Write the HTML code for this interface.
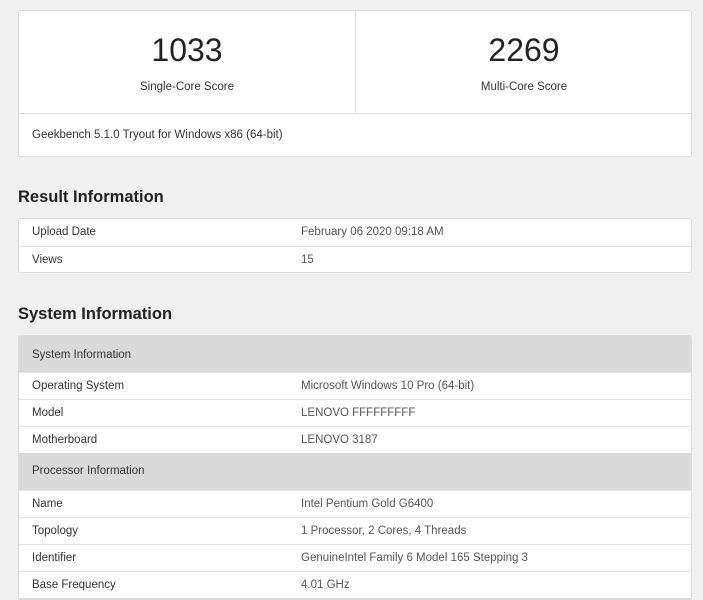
<!DOCTYPE html>
<html style="overflow:hidden"><head><style>
html,body{overflow:hidden;height:600px}
body{margin:0;background:#f0f0f0;font-family:"Liberation Sans",Arial,sans-serif;color:#333;width:703px;position:relative}
.card{position:absolute;left:18px;width:674px;background:#fff;border:1px solid #dcdcdc;border-radius:3px;box-sizing:border-box;overflow:hidden}
.score{position:absolute;top:0;width:336px;height:102px;text-align:center}
.score .n{font-size:32px;margin-top:21px;color:#222;line-height:36px}
.score .l{font-size:11.5px;margin-top:13px;color:#333}
h2{position:absolute;left:18px;margin:0;font-size:16.5px;font-weight:bold;color:#222}
.row{position:absolute;left:0;right:0;height:27px;border-top:1px solid #e4e4e4;font-size:11.5px;box-sizing:border-box}
.row span{position:absolute;top:7px}
.row .a{left:13px}.row .b{left:282px;color:#555}
.hd{position:absolute;left:0;right:0;background:#dadada;font-size:11.5px;box-sizing:border-box}
.hd span{position:absolute;left:13px}
</style></head><body>
<div class="card" style="top:10px;height:147px">
<div class="score" style="left:0"><div class="n">1033</div><div class="l">Single-Core Score</div></div>
<div style="position:absolute;left:336px;top:0;width:1px;height:102px;background:#dcdcdc"></div>
<div class="score" style="left:337px"><div class="n">2269</div><div class="l">Multi-Core Score</div></div>
<div style="position:absolute;left:0;right:0;top:102px;border-top:1px solid #dcdcdc;height:44px;font-size:11.5px"><span style="position:absolute;left:13px;top:15px">Geekbench 5.1.0 Tryout for Windows x86 (64-bit)</span></div>
</div>
<h2 style="top:188px">Result Information</h2>
<div class="card" style="top:218px;height:55px">
<div class="row" style="top:0;border-top:none"><span class="a">Upload Date</span><span class="b">February 06 2020 09:18 AM</span></div>
<div class="row" style="top:27px"><span class="a">Views</span><span class="b">15</span></div>
</div>
<h2 style="top:305px">System Information</h2>
<div class="card" style="top:335px;height:266px;border-bottom:none">
<div class="hd" style="top:0;height:36px"><span style="top:13px">System Information</span></div>
<div class="row" style="top:36px"><span class="a">Operating System</span><span class="b">Microsoft Windows 10 Pro (64-bit)</span></div>
<div class="row" style="top:63px"><span class="a">Model</span><span class="b">LENOVO FFFFFFFFF</span></div>
<div class="row" style="top:90px"><span class="a">Motherboard</span><span class="b">LENOVO 3187</span></div>
<div class="hd" style="top:117px;height:37px"><span style="top:12px">Processor Information</span></div>
<div class="row" style="top:154px"><span class="a">Name</span><span class="b">Intel Pentium Gold G6400</span></div>
<div class="row" style="top:181px"><span class="a">Topology</span><span class="b">1 Processor, 2 Cores, 4 Threads</span></div>
<div class="row" style="top:208px"><span class="a">Identifier</span><span class="b">GenuineIntel Family 6 Model 165 Stepping 3</span></div>
<div class="row" style="top:235px"><span class="a">Base Frequency</span><span class="b">4.01 GHz</span></div>
<div class="hd" style="top:262px;height:10px"></div>
</div>
</body></html>
